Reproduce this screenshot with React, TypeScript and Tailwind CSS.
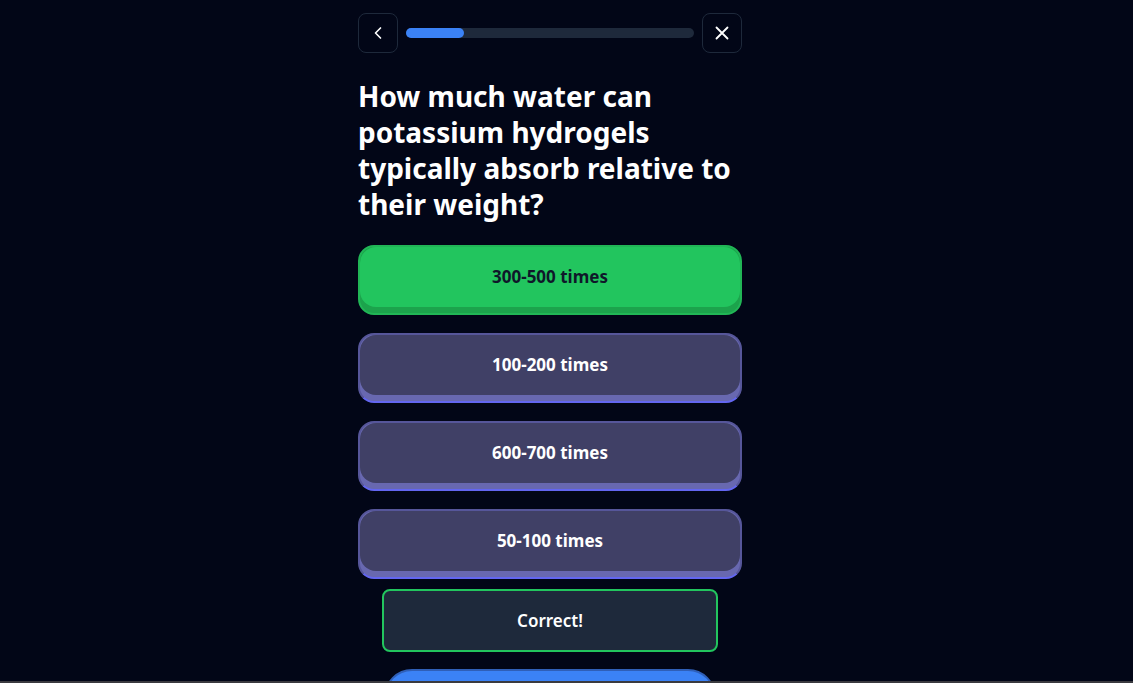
import React from "react";

const options = [
  { label: "300-500 times", correct: true },
  { label: "100-200 times", correct: false },
  { label: "600-700 times", correct: false },
  { label: "50-100 times", correct: false },
];

export default function App() {
  return (
    <div
      className="min-h-screen bg-[#020617] text-white"
      style={{ fontFamily: '"Noto Sans", "Open Sans", sans-serif' }}
    >
      <div className="w-[1100px]">
        <div className="mx-auto w-[384px] pt-[13px]">
          <div className="flex items-center gap-2">
            <button className="flex h-10 w-10 items-center justify-center rounded-lg border border-[#1e293b] text-white">
              <svg width="20" height="20" viewBox="0 0 24 24" fill="none" stroke="currentColor" strokeWidth="2" strokeLinecap="round" strokeLinejoin="round">
                <path d="M15 18l-6-6 6-6" />
              </svg>
            </button>
            <div className="h-[10px] flex-1 rounded-full bg-[#1e293b]">
              <div className="h-full w-[20%] rounded-full bg-[#3b82f6]" />
            </div>
            <button className="flex h-10 w-10 items-center justify-center rounded-lg border border-[#1e293b] text-white">
              <svg width="22" height="22" viewBox="0 0 24 24" fill="none" stroke="currentColor" strokeWidth="2" strokeLinecap="round" strokeLinejoin="round">
                <path d="M18 6L6 18M6 6l12 12" />
              </svg>
            </button>
          </div>

          <h1 className="mt-[25px] text-[28px] font-bold leading-[36px] text-white">
            How much water can potassium hydrogels typically absorb relative to their weight?
          </h1>

          <div className="mt-[23px] flex flex-col gap-[18px]">
            {options.map((o) =>
              o.correct ? (
                <button
                  key={o.label}
                  className="rounded-2xl border-2 border-[#21b656] bg-[#1ca34c] pb-[6px]"
                >
                  <div className="flex h-[60px] items-center justify-center rounded-2xl bg-[#22c55e] text-[17px] font-bold text-[#0f172a]">
                    {o.label}
                  </div>
                </button>
              ) : (
                <button
                  key={o.label}
                  className="rounded-2xl border-2 border-[#56569a] border-b-[#6366f1] bg-[#6868b0] pb-[6px]"
                >
                  <div className="flex h-[60px] items-center justify-center rounded-2xl bg-[#404066] text-[17px] font-bold text-white">
                    {o.label}
                  </div>
                </button>
              )
            )}
          </div>

          <div className="mx-auto mt-[10px] flex h-[63px] w-[336px] items-center justify-center rounded-lg border-2 border-[#22c55e] bg-[#1e293b] text-[17px] font-semibold text-white">
            Correct!
          </div>

          <button className="mx-auto mt-[17px] block h-[60px] w-[332px] rounded-[28px] border-2 border-[#2f5fb8] bg-[#3b82f6] text-[17px] font-bold text-white">
            Next
          </button>
        </div>
      </div>
      <div className="fixed bottom-0 left-0 right-0 h-[2px] bg-[#3a3a3f]" />
    </div>
  );
}
